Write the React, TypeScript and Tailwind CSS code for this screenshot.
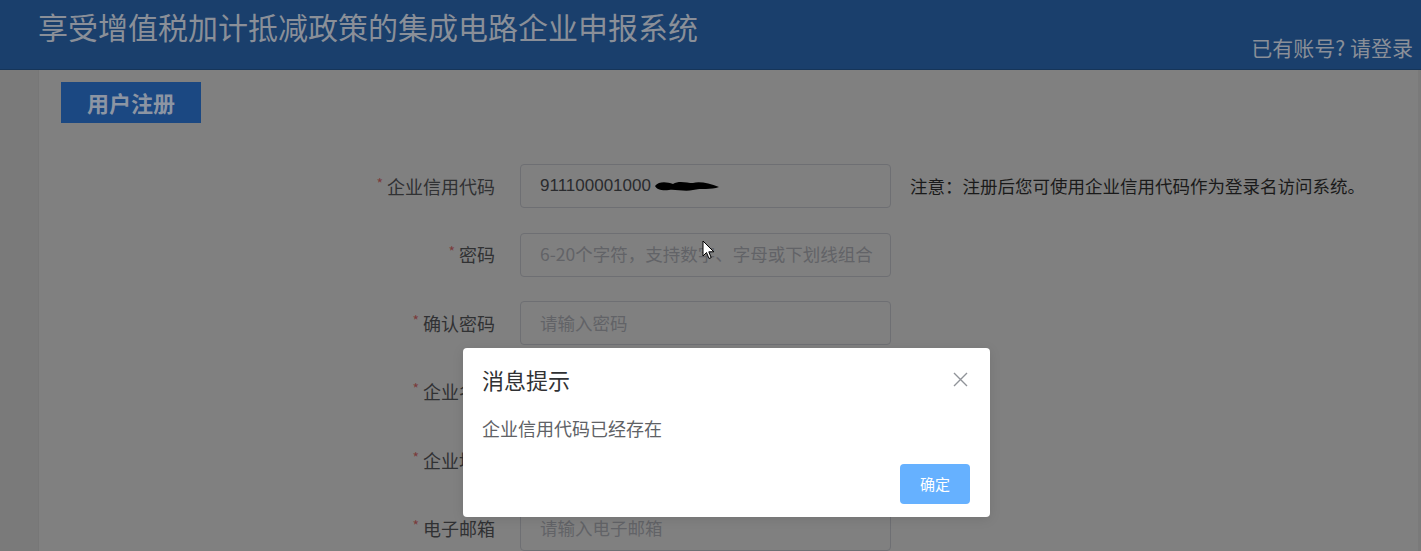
import React from "react";

const font = { fontFamily: '"Microsoft YaHei", "Noto Sans CJK SC", "Liberation Sans", sans-serif' };

const rows = [
  { label: "企业信用代码", value: "911100001000", placeholder: "" },
  { label: "密码", value: "", placeholder: "6-20个字符，支持数字、字母或下划线组合" },
  { label: "确认密码", value: "", placeholder: "请输入密码" },
  { label: "企业名称", value: "", placeholder: "请输入企业名称" },
  { label: "企业地址", value: "", placeholder: "请输入企业地址" },
  { label: "电子邮箱", value: "", placeholder: "请输入电子邮箱" },
];

const Row = ({ label, value, placeholder, note }: { label: string; value: string; placeholder: string; note?: boolean }) => (
  <div className="flex items-center h-[44px]">
    <div className="w-[481px] pr-[25px] text-right text-[18px] text-[#303133] whitespace-nowrap">
      <span className="text-[#7a3c3c] mr-[4px] text-[14px] align-top">*</span>
      {label}
    </div>
    <div className="relative w-[371px] h-[44px] rounded-[4px] border border-[#6e6f73] flex items-center pl-[19px]">
      {value ? (
        <span className="text-[#2a2b2e] flex items-center text-[17px] font-['Liberation_Sans',sans-serif]">
          {value}
          <svg width="68" height="16" viewBox="0 0 68 16" className="ml-[2px]">
            <path d="M2 8 C6 3 14 4 20 6 C26 2 34 5 40 5 C46 3 56 5 66 9 C58 12 48 10 40 12 C32 14 22 11 16 12 C10 13 4 12 2 8 Z" fill="#000" />
          </svg>
        </span>
      ) : (
        <span className="text-[#626367] text-[17.5px] whitespace-nowrap">{placeholder}</span>
      )}
    </div>
    {note && (
      <div className="pl-[19px] text-[17.5px] text-[#1a1a1a] whitespace-nowrap">
        注意：注册后您可使用企业信用代码作为登录名访问系统。
      </div>
    )}
  </div>
);

export default function App() {
  return (
    <div className="relative w-[1421px] h-[551px] overflow-hidden bg-[#7a7a7a]" style={font}>
      <header className="relative h-[70px] bg-[#1a3f6c] border-b border-[#163559]">
        <h1 className="absolute left-[38px] top-[6px] text-[30px] leading-[40px] text-[#8a8f98]">
          享受增值税加计抵减政策的集成电路企业申报系统
        </h1>
        <div className="absolute right-[8px] top-[33px] text-[21px] leading-[28px] text-[#8a8f98] whitespace-nowrap">
          已有账号?&nbsp;请登录
        </div>
      </header>

      <main className="ml-[38px] mr-[3px] h-[481px] bg-[#808080] border-l border-[#777]">
        <div className="pt-[12px] pl-[22px]">
          <div className="w-[140px] h-[41px] bg-[#1b4882] flex items-center justify-center text-[22px] font-bold text-[#8c95a3]">
            用户注册
          </div>
        </div>
        <div className="mt-[41px] flex flex-col gap-[24.5px]">
          {rows.map((r, i) => (
            <Row key={r.label} {...r} note={i === 0} />
          ))}
        </div>
      </main>

      {/* mouse cursor */}
      <svg className="absolute left-[702px] top-[240px]" width="14" height="20" viewBox="0 0 14 20">
        <path d="M1 1 L1 16 L4.5 12.5 L7 18.5 L9.2 17.6 L6.8 11.8 L11.8 11.8 Z" fill="#fff" stroke="#000" strokeWidth="1" />
      </svg>

      {/* message box */}
      <div className="absolute left-[463px] top-[348px] w-[527px] h-[169px] bg-white rounded-[4px] shadow-[0_2px_12px_rgba(0,0,0,0.1)]">
        <div className="flex items-center justify-between pl-[19px] pr-[22px] pt-[16px]">
          <span className="text-[22px] leading-[30px] text-[#303133]">消息提示</span>
          <svg width="15" height="15" viewBox="0 0 15 15" className="mt-[1px]">
            <path d="M1 1 L14 14 M14 1 L1 14" stroke="#909399" strokeWidth="1.4" />
          </svg>
        </div>
        <div className="pl-[19px] pt-[22px] text-[18px] leading-[24px] text-[#606266]">企业信用代码已经存在</div>
        <div className="flex justify-end pr-[20px] pt-[24px]">
          <button className="w-[70px] h-[40px] rounded-[4px] bg-[#66b1ff] text-white text-[15px]">确定</button>
        </div>
      </div>
    </div>
  );
}
